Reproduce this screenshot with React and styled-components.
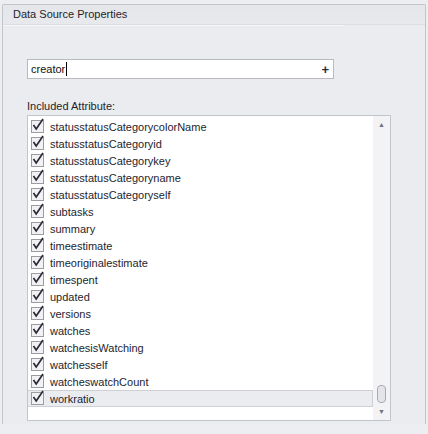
import React from 'react';
import styled, { createGlobalStyle } from 'styled-components';

const GlobalStyle = createGlobalStyle`
  html, body {
    margin: 0;
    padding: 0;
    background: #eceef1;
  }
  body {
    font-family: "Liberation Sans", Arial, sans-serif;
    font-size: 11px;
    color: #1e1e2e;
  }
`;

const attributes = [
  'statusstatusCategorycolorName',
  'statusstatusCategoryid',
  'statusstatusCategorykey',
  'statusstatusCategoryname',
  'statusstatusCategoryself',
  'subtasks',
  'summary',
  'timeestimate',
  'timeoriginalestimate',
  'timespent',
  'updated',
  'versions',
  'watches',
  'watchesisWatching',
  'watchesself',
  'watcheswatchCount',
  'workratio',
];

const CheckIcon = () => (
  <svg width="14" height="14" viewBox="0 0 14 14">
    <path d="M2.5 7 L5.2 11 L12 1" fill="none" stroke="#2a2a3a" strokeWidth="1.7" />
  </svg>
);

const App = () => {
  return (
    <>
      <GlobalStyle />
      <Page>
        <Panel>
          <Header>Data Source Properties</Header>
          <HeaderRule />
          <Body>
            <InputBox>
              <InputText>
                creator<Caret />
              </InputText>
              <PlusSign>+</PlusSign>
            </InputBox>
            <Label>Included Attribute:</Label>
            <ListBox>
              <Rows>
                {attributes.map((name, i) => (
                  <Row key={name} selected={i === attributes.length - 1}>
                    <CheckBox>
                      <CheckIcon />
                    </CheckBox>
                    <RowText>{name}</RowText>
                  </Row>
                ))}
              </Rows>
              <ScrollBar>
                <Arrow>▲</Arrow>
                <Track>
                  <Thumb />
                </Track>
                <Arrow>▼</Arrow>
              </ScrollBar>
            </ListBox>
          </Body>
        </Panel>
      </Page>
    </>
  );
};

const Page = styled.div`
  width: 428px;
  height: 434px;
  padding: 4px 2px 0 2px;
  box-sizing: border-box;
`;

const Panel = styled.div`
  width: 424px;
  height: 420px;
  box-sizing: border-box;
  border: 1px solid #c3c5cb;
  border-bottom: none;
  border-radius: 2px 2px 0 0;
  background: #ebecf0;
  display: flex;
  flex-direction: column;
`;

const Header = styled.div`
  height: 19px;
  line-height: 19px;
  padding-left: 10px;
  background: linear-gradient(#e5e6ea, #e8e9ed);
  border-bottom: 1px solid #dcdde1;
  color: #1e1e2e;
`;

const HeaderRule = styled.div`
  width: 342px;
  height: 1px;
  background: #f7f7f9;
`;

const Body = styled.div`
  padding: 33px 0 0 24px;
  display: flex;
  flex-direction: column;
`;

const InputBox = styled.div`
  width: 307px;
  height: 20px;
  box-sizing: border-box;
  border: 1px solid #b8bac0;
  background: #fff;
  display: flex;
  align-items: center;
  justify-content: space-between;
  padding: 0 4px 0 3px;
`;

const InputText = styled.span`
  display: flex;
  align-items: center;
  color: #111;
`;

const Caret = styled.span`
  display: inline-block;
  width: 1px;
  height: 14px;
  background: #000;
  margin-left: 1px;
`;

const PlusSign = styled.span`
  font-weight: bold;
  font-size: 13px;
  color: #2a2a3a;
`;

const Label = styled.div`
  margin-top: 18px;
  height: 18px;
  line-height: 18px;
  color: #1e1e2e;
`;

const ListBox = styled.div`
  width: 364px;
  height: 306px;
  box-sizing: border-box;
  border: 1px solid #c3c5cb;
  background: #fff;
  display: flex;
`;

const Rows = styled.div`
  flex: 1;
  display: flex;
  flex-direction: column;
  padding-top: 2px;
`;

const Row = styled.div`
  height: 17px;
  box-sizing: border-box;
  display: flex;
  align-items: center;
  padding-left: 3px;
  background: ${p => (p.selected ? '#ebecf0' : 'transparent')};
  border: 1px solid ${p => (p.selected ? '#cfd0d4' : 'transparent')};
  border-left: none;
`;

const CheckBox = styled.span`
  width: 13px;
  height: 13px;
  box-sizing: border-box;
  border: 1px solid #9a9ca4;
  background: #f2f2f4;
  position: relative;
  svg {
    position: absolute;
    left: -1px;
    top: -3px;
  }
`;

const RowText = styled.span`
  margin-left: 6px;
  color: #1e1e2e;
`;

const ScrollBar = styled.div`
  width: 17px;
  background: #f3f3f5;
  display: flex;
  flex-direction: column;
  align-items: center;
`;

const Arrow = styled.div`
  height: 17px;
  line-height: 17px;
  font-size: 7px;
  color: #6e7080;
`;

const Track = styled.div`
  flex: 1;
  display: flex;
  flex-direction: column;
  justify-content: flex-end;
`;

const Thumb = styled.div`
  width: 7px;
  height: 16px;
  border: 1px solid #a8aab2;
  border-radius: 4px;
  background: #e4e5ea;
`;

export default App;
